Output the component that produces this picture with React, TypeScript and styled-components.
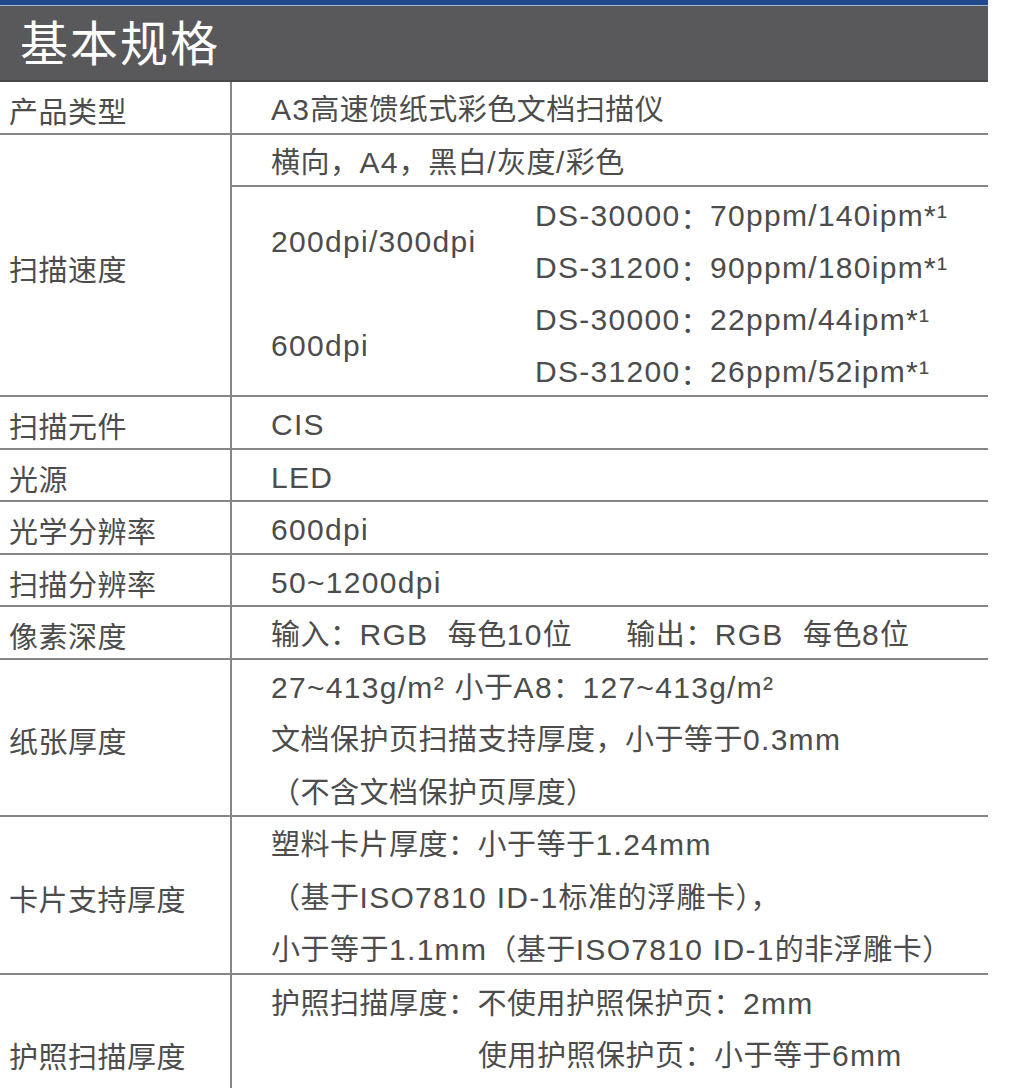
import React from "react";
import styled, { createGlobalStyle } from "styled-components";

const GlobalStyle = createGlobalStyle`
  html, body {
    margin: 0;
    padding: 0;
    background: #ffffff;
  }
  body {
    font-family: "Liberation Sans", "Noto Sans CJK SC", sans-serif;
    color: #4c4c4c;
  }
  * {
    box-sizing: border-box;
  }
`;

const Page = styled.div`
  width: 988px;
  font-size: 29px;
  letter-spacing: 0.5px;
`;

const Header = styled.div`
  height: 82px;
  background: #59595b;
  border-top: 5px solid #1f4a8c;
  box-shadow: inset 0 1px 0 #a7b6cc;
  border-bottom: 2px solid #48484a;
  display: flex;
  align-items: center;
  padding: 4px 0 0 20px;
`;

const Title = styled.h1`
  margin: 0;
  font-size: 48px;
  font-weight: normal;
  letter-spacing: 2px;
  color: #ffffff;
  line-height: 1;
`;

const Grid = styled.div`
  display: grid;
  grid-template-columns: 230px 1fr;
  grid-auto-rows: 50.5px;
  gap: 2px;
  background: #868686;
`;

const Label = styled.div<{ $span?: number }>`
  grid-column: 1;
  grid-row: span ${(p) => p.$span ?? 1};
  background: #ffffff;
  display: flex;
  align-items: center;
  padding: 6px 0 0 9px;
`;

const Value = styled.div<{ $span?: number; $top?: boolean }>`
  grid-column: 2;
  grid-row: span ${(p) => p.$span ?? 1};
  background: #ffffff;
  display: flex;
  flex-direction: column;
  justify-content: ${(p) => (p.$top ? "flex-start" : "center")};
  padding: ${(p) => (p.$top ? "3px" : "6px")} 0 0 39px;
  overflow: hidden;
`;

const Line = styled.div<{ $indent?: number }>`
  height: 52.5px;
  line-height: 52.5px;
  white-space: nowrap;
  padding-left: ${(p) => p.$indent ?? 0}px;
  flex-shrink: 0;
`;

// latin runs are set a little larger than the CJK text, as in the original
const Latin = styled.span`
  font-size: 30px;
  letter-spacing: 1.3px;
`;

const Gap = styled.span`
  display: inline-block;
  width: 54px;
`;

const SpeedBlock = styled.div`
  grid-column: 2;
  grid-row: span 4;
  background: #ffffff;
  display: grid;
  grid-template-columns: 264px 1fr;
  grid-template-rows: repeat(4, 1fr);
  padding-left: 39px;
  grid-auto-flow: column dense;
`;

const SpeedMode = styled.div`
  grid-column: 1;
  grid-row: span 2;
  display: flex;
  align-items: center;
  padding-top: 6px;
  white-space: nowrap;
`;

const SpeedItem = styled.div`
  grid-column: 2;
  display: flex;
  align-items: center;
  padding-top: 6px;
  white-space: nowrap;
`;

const CJK = /([\u2e80-\u9fff\uff00-\uffef]+)/;

const Mixed = ({ text }: { text: string }) => (
  <>
    {text.split(CJK).map((part, i) =>
      part === "" ? null : i % 2 === 1 ? (
        <React.Fragment key={i}>{part}</React.Fragment>
      ) : (
        <Latin key={i}>{part}</Latin>
      )
    )}
  </>
);

interface SpecRow {
  label: string;
  lines: (string | string[])[];
}

const simpleRows: SpecRow[] = [
  { label: "扫描元件", lines: ["CIS"] },
  { label: "光源", lines: ["LED"] },
  { label: "光学分辨率", lines: ["600dpi"] },
  { label: "扫描分辨率", lines: ["50~1200dpi"] },
  {
    label: "像素深度",
    lines: [["输入：RGB\u00a0\u00a0每色10位", "输出：RGB\u00a0\u00a0每色8位"]],
  },
  {
    label: "纸张厚度",
    lines: [
      "27~413g/m² 小于A8：127~413g/m²",
      "文档保护页扫描支持厚度，小于等于0.3mm",
      "（不含文档保护页厚度）",
    ],
  },
  {
    label: "卡片支持厚度",
    lines: [
      "塑料卡片厚度：小于等于1.24mm",
      "（基于ISO7810 ID-1标准的浮雕卡），",
      "小于等于1.1mm（基于ISO7810 ID-1的非浮雕卡）",
    ],
  },
];

const speeds = [
  {
    mode: "200dpi/300dpi",
    items: ["DS-30000：70ppm/140ipm*¹", "DS-31200：90ppm/180ipm*¹"],
  },
  {
    mode: "600dpi",
    items: ["DS-30000：22ppm/44ipm*¹", "DS-31200：26ppm/52ipm*¹"],
  },
];

export default function App() {
  return (
    <>
      <GlobalStyle />
      <Page>
        <Header>
          <Title>基本规格</Title>
        </Header>
        <Grid>
          <Label>产品类型</Label>
          <Value>
            <Line>
              <Mixed text="A3高速馈纸式彩色文档扫描仪" />
            </Line>
          </Value>

          <Label $span={5}>扫描速度</Label>
          <Value>
            <Line>
              <Mixed text="横向，A4，黑白/灰度/彩色" />
            </Line>
          </Value>
          <SpeedBlock>
            {speeds.map((s) => (
              <React.Fragment key={s.mode}>
                <SpeedMode>
                  <Mixed text={s.mode} />
                </SpeedMode>
                {s.items.map((it) => (
                  <SpeedItem key={it}>
                    <Mixed text={it} />
                  </SpeedItem>
                ))}
              </React.Fragment>
            ))}
          </SpeedBlock>

          {simpleRows.map((r) => (
            <React.Fragment key={r.label}>
              <Label $span={r.lines.length}>{r.label}</Label>
              <Value $span={r.lines.length}>
                {r.lines.map((l, i) => (
                  <Line key={i}>
                    {Array.isArray(l) ? (
                      <>
                        <Mixed text={l[0]} />
                        <Gap />
                        <Mixed text={l[1]} />
                      </>
                    ) : (
                      <Mixed text={l} />
                    )}
                  </Line>
                ))}
              </Value>
            </React.Fragment>
          ))}

          <Label $span={3}>护照扫描厚度</Label>
          <Value $span={3} $top>
            <Line>
              <Mixed text="护照扫描厚度：不使用护照保护页：2mm" />
            </Line>
            <Line $indent={207}>
              <Mixed text="使用护照保护页：小于等于6mm" />
            </Line>
          </Value>
        </Grid>
      </Page>
    </>
  );
}
